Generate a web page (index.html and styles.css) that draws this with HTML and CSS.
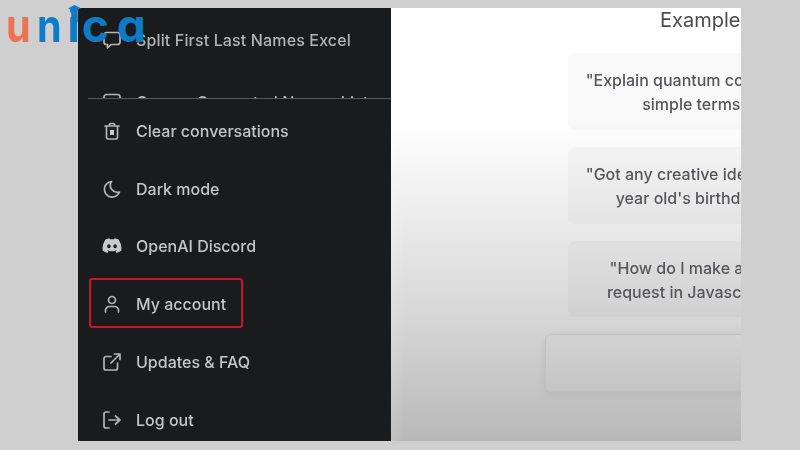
FILE: index.html
```html
<!DOCTYPE html>
<html lang="en">
<head>
<meta charset="utf-8">
<title>My account</title>
<link rel="stylesheet" href="styles.css">
</head>
<body>
<div class="frame">
  <aside class="sidebar">
    <div class="history">
      <div class="row">
        <svg class="icon" viewBox="0 0 20 20"><path d="M2 5a2.500 2.500 0 0 1 2.500-2.500h11A2.500 2.500 0 0 1 18 5v7a2.500 2.500 0 0 1-2.500 2.500H9L5.500 18v-3.500h-1A2.500 2.500 0 0 1 2 12z"/></svg>
        <span class="fade">Split First Last Names Excel</span>
      </div>
      <div class="row">
        <svg class="icon" viewBox="0 0 20 20"><path d="M2 5a2.500 2.500 0 0 1 2.500-2.500h11A2.500 2.500 0 0 1 18 5v7a2.500 2.500 0 0 1-2.500 2.500H9L5.500 18v-3.500h-1A2.500 2.500 0 0 1 2 12z"/></svg>
        <span class="fade">Cancer Generated Names List</span>
      </div>
    </div>
    <div class="menu">
      <div class="row">
        <svg class="icon" viewBox="0 0 20 20"><path d="M3 5h14M7.500 5V3.500a1 1 0 0 1 1-1h3a1 1 0 0 1 1 1V5M4.500 5v11.500a1.500 1.500 0 0 0 1.500 1.500h8a1.500 1.500 0 0 0 1.500-1.500V5"/><rect class="solid" x="8" y="9" width="4" height="5"/></svg>
        <span>Clear conversations</span>
      </div>
      <div class="row">
        <svg class="icon" viewBox="0 0 20 20"><path d="M9.500 2.500a7.800 7.800 0 1 0 8 10.500 7 7 0 0 1-8-10.500z"/></svg>
        <span>Dark mode</span>
      </div>
      <div class="row">
        <svg class="icon icon-wide" viewBox="0 0 20 16"><path class="solid" d="M16.500 1.500A16 16 0 0 0 12.600.300l-.5 1a15 15 0 0 0-4.200 0l-.5-1a16 16 0 0 0-3.900 1.200C1 5.200.300 8.900.600 12.500a16 16 0 0 0 4.900 2.500l1-1.700-1.600-.8.400-.3a11.500 11.500 0 0 0 9.400 0l.4.300-1.600.8 1 1.700a16 16 0 0 0 4.900-2.500c.4-4.200-.7-7.800-2.900-11zM6.900 10.300c-1 0-1.700-.9-1.700-2s.7-2 1.700-2 1.800.9 1.700 2c0 1.100-.8 2-1.700 2zm6.200 0c-1 0-1.700-.9-1.700-2s.7-2 1.700-2 1.800.9 1.700 2c0 1.100-.7 2-1.700 2z"/></svg>
        <span>OpenAI Discord</span>
      </div>
      <div class="row row-marked">
        <svg class="icon" viewBox="0 0 20 20"><circle cx="10" cy="6" r="3.500"/><path d="M3.500 18v-1.500a4 4 0 0 1 4-4h5a4 4 0 0 1 4 4V18"/></svg>
        <span>My account</span>
      </div>
      <div class="row">
        <svg class="icon" viewBox="0 0 20 20"><path d="M15.500 11v5a2 2 0 0 1-2 2H4a2 2 0 0 1-2-2V6.500a2 2 0 0 1 2-2h5M12.500 2H18v5.500M18 2l-9 9"/></svg>
        <span>Updates &amp; FAQ</span>
      </div>
      <div class="row">
        <svg class="icon" viewBox="0 0 20 20"><path d="M7 18H4a2 2 0 0 1-2-2V4a2 2 0 0 1 2-2h3M13.500 14l4.500-4-4.500-4M18 10H7"/></svg>
        <span>Log out</span>
      </div>
    </div>
  </aside>
  <main class="main">
    <h2 class="heading">Examples</h2>
    <div class="card">"Explain quantum computing in<br>simple terms" →</div>
    <div class="card">"Got any creative ideas for a 10<br>year old's birthday?" →</div>
    <div class="card card-last">"How do I make an HTTP<br>request in Javascript?" →</div>
    <div class="input"></div>
  </main>
</div>
<div class="logo"><span class="logo-u">u</span><span class="logo-n">n</span><span class="logo-i">i</span><span class="logo-c">c</span><span>a</span><svg class="logo-hat" viewBox="0 0 12 16"><path d="M6 0l6 3-3 1.500V16H3V4.500L0 3z"/></svg></div>
</body>
</html>
```
FILE: styles.css
```css
*, *::after { box-sizing: border-box; }
html, body { margin: 0; height: 100%; }
body {
  position: relative;
  width: 800px;
  height: 450px;
  overflow: hidden;
  background: #cfcfcf;
  padding: 8px 59px 9px 78px;
  font-family: Inter, "Liberation Sans", sans-serif;
}
.frame {
  display: flex;
  width: 663px;
  height: 433px;
  overflow: hidden;
}
.sidebar {
  width: 313px;
  flex: none;
  background: #191b1d;
  color: #c6c6c6;
  font-size: 16px;
  font-weight: 500;
  display: flex;
  flex-direction: column;
}
.history {
  height: 91px;
  flex: none;
  overflow: hidden;
  padding-top: 3px;
  border-bottom: 1px solid #56585a;
  margin-left: 10px;
}
.history .row { padding-left: 14px; height: 58px; margin-bottom: 4px; }
.fade {
  letter-spacing: .14px;
  color: #b4b4b4;
}
.menu {
  display: flex;
  flex-direction: column;
  padding-top: 3px;
}
.row {
  height: 57.800px;
  display: flex;
  align-items: center;
  gap: 14px;
  padding-left: 24px;
  white-space: nowrap;
  flex: none;
}
.row span { filter: blur(.5px); }
.icon {
  width: 20px;
  height: 20px;
  flex: none;
  fill: none;
  stroke: #b4b4b4;
  stroke-width: 1.700;
  stroke-linecap: round;
  stroke-linejoin: round;
  overflow: visible;
  filter: blur(.4px);
}
.icon .solid { fill: #c9c9c9; stroke: none; }
.icon-wide { height: 16px; }
.row-marked { position: relative; }
.row-marked::after {
  content: "";
  position: absolute;
  left: 11px;
  top: 3px;
  width: 154px;
  height: 50px;
  border: 2px solid #c8142e;
  border-radius: 3px;
}
.main {
  flex: 1;
  min-width: 0;
  overflow: hidden;
  display: flex;
  flex-direction: column;
  background:
    linear-gradient(90deg, rgba(255, 255, 255, .14), rgba(255, 255, 255, 0) 14px),
    linear-gradient(#fff 0, #fff 112px, #eaeaea 217px, #d5d5d5 317px, #b9b8b9 433px);
  color: #55555a;
  font-size: 16px;
  font-weight: 500;
  line-height: 24px;
}
.heading {
  margin: 0;
  padding-left: 269px;
  height: 45px;
  font-size: 20px;
  font-weight: 400;
  line-height: 24px;
  color: #4c4c50;
  white-space: nowrap;
  filter: blur(.4px);
}
.card {
  flex: none;
  width: 274px;
  margin-left: 177px;
  height: 77px;
  margin-bottom: 17px;
  padding-top: 15px;
  border-radius: 6px;
  background: rgba(0, 0, 0, .025);
  text-align: center;
  white-space: nowrap;
  filter: blur(.5px);
}
.card-last { height: 76px; }
.input {
  flex: none;
  width: 300px;
  margin-left: 154px;
  height: 58px;
  border-radius: 7px;
  border: 1px solid #c2c1c2;
  box-shadow: 0 2px 10px rgba(0, 0, 0, .08);
  filter: blur(.4px);
}
.logo {
  position: absolute;
  left: 6px;
  top: -3px;
  display: flex;
  font-family: Inter, sans-serif;
  font-feature-settings: "cv11";
  font-weight: 700;
  font-size: 46px;
  line-height: 56px;
  color: #0b7cc5;
}
.logo-u, .logo-n { display: inline-block; transform-origin: left center; transform: scaleX(.86); }
.logo-u { color: #f2704f; margin-right: 2px; }
.logo-n { margin-right: 2px; }
.logo-i { margin-right: 2px; }
.logo-c { margin-right: 8px; }
.logo-hat {
  position: absolute;
  left: 62px;
  top: 8px;
  width: 13px;
  height: 17px;
  fill: #0b7cc5;
}
```
